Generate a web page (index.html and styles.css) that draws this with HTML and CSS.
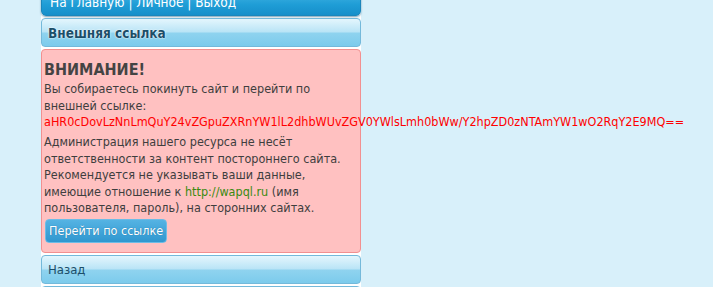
FILE: index.html
```html
<!DOCTYPE html>
<html lang="ru">
<head>
<meta charset="utf-8">
<title>Внешняя ссылка</title>
<link rel="stylesheet" href="styles.css">
</head>
<body>
<div class="page">
  <div class="topbar"><a href="#">На главную</a> | <a href="#">Личное</a> | <a href="#">Выход</a></div>
  <div class="head">Внешняя ссылка</div>
  <div class="warn">
    <div class="warn-title">ВНИМАНИЕ!</div>
    <div class="warn-text">Вы собираетесь покинуть сайт и перейти по внешней ссылке:</div>
    <div class="ext-link">aHR0cDovLzNnLmQuY24vZGpuZXRnYW1lL2dhbWUvZGV0YWlsLmh0bWw/Y2hpZD0zNTAmYW1wO2RqY2E9MQ==</div>
    <div class="warn-note">Администрация нашего ресурса не несёт ответственности за контент постороннего сайта. Рекомендуется не указывать ваши данные, имеющие отношение к <a class="site" href="#">http://wapql.ru</a> (имя пользователя, пароль), на сторонних сайтах.</div>
    <a class="btn" href="#">Перейти по ссылке</a>
  </div>
  <div class="row"><a href="#">Назад</a></div>
  <div class="row"></div>
</div>
</body>
</html>
```
FILE: styles.css
```css
html, body {
  margin: 0;
  padding: 0;
}
body {
  background: #d8f0fa;
  font-family: "DejaVu Sans Condensed", "DejaVu Sans", sans-serif;
  font-size: 12.5px;
  color: #3e3e3e;
}
.page {
  width: 320px;
  margin: -12px 0 0 41px;
  background: #ffffff;
  display: flex;
  flex-direction: column;
  gap: 2px;
}
.topbar {
  padding: 5px 8px 4px;
  line-height: 17px;
  font-size: 13.5px;
  color: #fff;
  background: linear-gradient(#4ab8e6, #1f9dd6 60%, #168fca);
  border: 1px solid #1b86bb;
  border-radius: 0 0 5px 5px;
  box-shadow: 0 1px 2px rgba(10, 80, 120, 0.55);
}
.topbar a {
  color: #fff;
  text-decoration: none;
}
.head, .row {
  height: 27px;
  padding: 0 6px;
  line-height: 28px;
  font-size: 13px;
  color: #1c4e69;
  background: linear-gradient(#e4f6fd, #b9e4f6 48%, #8fd3ef 52%, #7ccbec);
  border: 1px solid #74b9da;
  border-radius: 4px;
}
.head {
  font-weight: bold;
  font-size: 13.5px;
  text-shadow: 0 0 2px #ffffff, 0 0 1px #ffffff;
}
.row a {
  color: #1c4e69;
  text-decoration: none;
}
.warn {
  background: #ffc1c1;
  border: 1px solid #f29090;
  border-radius: 4px;
  padding: 8px 2px 9px 2px;
  line-height: 16.5px;
}
.warn-title {
  font-size: 16px;
  font-weight: bold;
  color: #444;
  line-height: 23px;
}
.ext-link {
  color: #ff0000;
  white-space: nowrap;
  margin-bottom: 5px;
  line-height: 15px;
}
.warn-note .site {
  color: #3a8a10;
  text-decoration: none;
}
.btn {
  display: inline-block;
  margin: 2px 0 0 1px;
  padding: 0 3px;
  height: 22px;
  line-height: 22px;
  font-size: 12.5px;
  color: #fff;
  text-decoration: none;
  text-shadow: 0 0 1px #1c6f9e;
  background: linear-gradient(#55b3e3, #3097cf);
  border: 1px solid #6dbce6;
  border-radius: 4px;
}
```
